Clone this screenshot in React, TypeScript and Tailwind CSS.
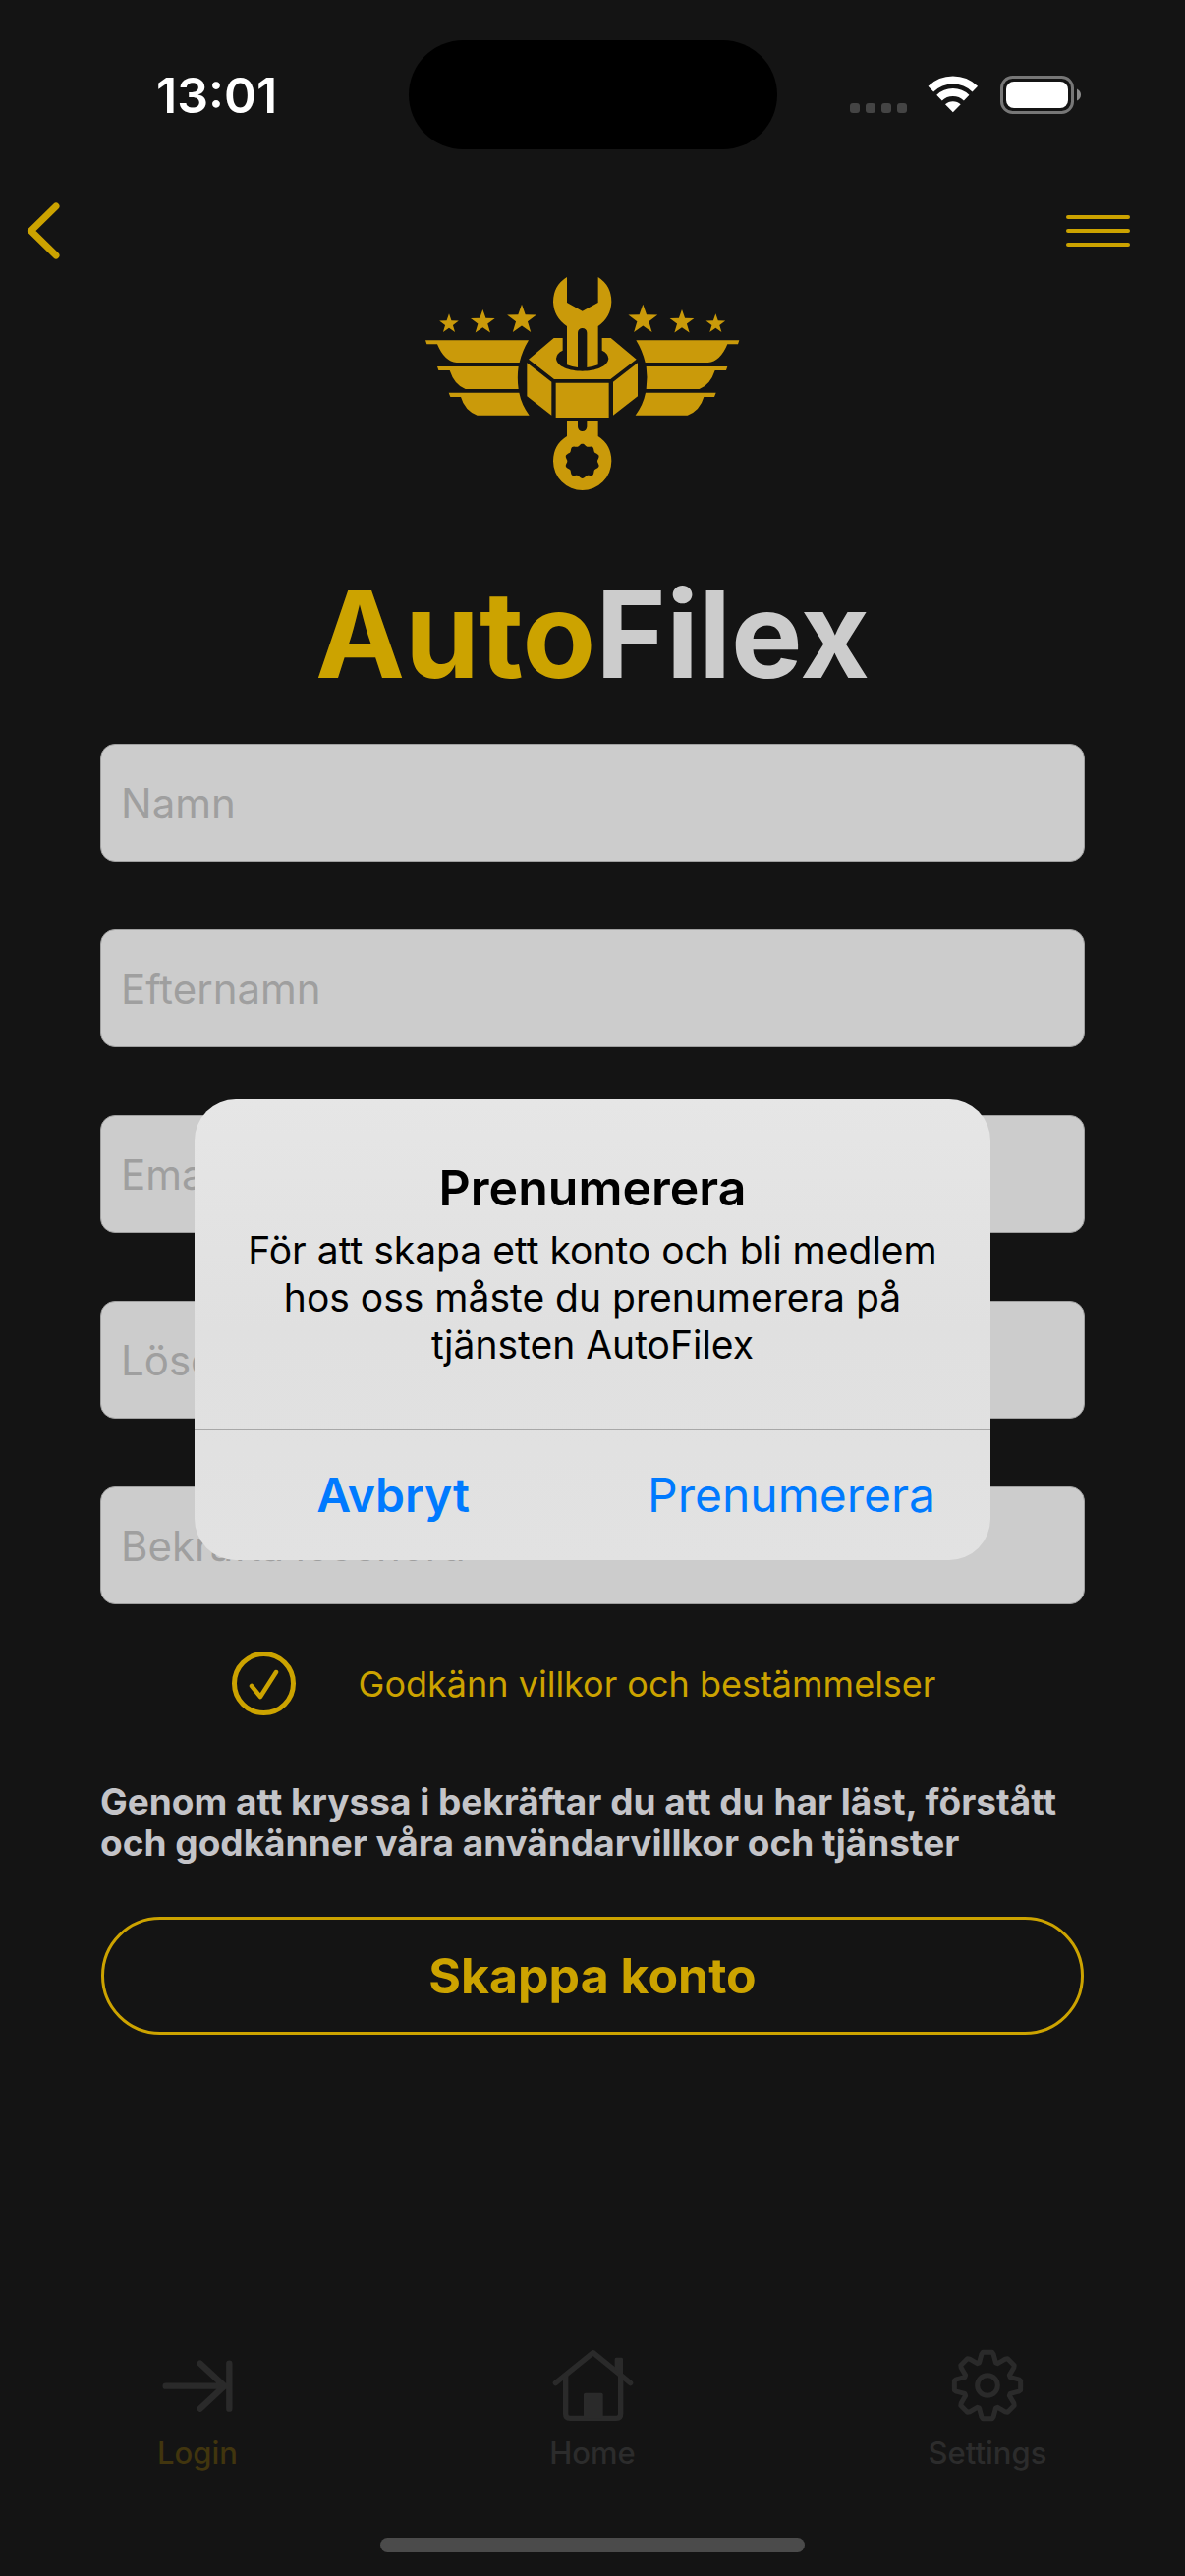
const GOLD = "#cca300";

function polar(cx: number, cy: number, r: number, deg: number) {
  const a = (deg * Math.PI) / 180;
  return `${(cx + r * Math.cos(a)).toFixed(1)} ${(cy + r * Math.sin(a)).toFixed(1)}`;
}

function starPath(cx: number, cy: number, r: number) {
  const pts = Array.from({ length: 10 }, (_, i) =>
    polar(cx, cy, i % 2 === 0 ? r : r * 0.4, -90 + i * 36),
  );
  return `M${pts.join("L")}Z`;
}

function scallopPath(cx: number, cy: number) {
  const pts = Array.from({ length: 120 }, (_, i) => {
    const deg = -90 + i * 3;
    const r = 49.5 + 3.5 * Math.cos((i * 3 * 10 * Math.PI) / 180);
    return polar(cx, cy, r, deg);
  });
  return `M${pts.join("L")}Z`;
}

function gearPath(cx: number, cy: number) {
  const pts = Array.from({ length: 8 }, (_, k) => {
    const a = -90 + k * 45;
    return [
      polar(cx, cy, 74, a - 20),
      polar(cx, cy, 97, a - 11),
      polar(cx, cy, 102, a - 8),
      polar(cx, cy, 102, a + 8),
      polar(cx, cy, 97, a + 11),
      polar(cx, cy, 74, a + 20),
    ].join("L");
  });
  return `M${pts.join("L")}Z`;
}

function WingWithStars() {
  return (
    <>
      <path d="M70 259H385Q365 292 357 327H165Q128 324 106 271H74Z" />
      <path d="M106 339H354Q349 373 354 408H192Q158 395 144 351H110Z" />
      <path d="M141 419H356Q363 455 387 488H228Q190 474 178 432H146Z" />
      <path d={starPath(142, 209, 31)} />
      <path d={starPath(245, 204, 39)} />
      <path d={starPath(364, 196, 47)} />
      <path d="M380 328L455 386V488L380 430Z" />
    </>
  );
}

function Emblem() {
  return (
    <svg viewBox="70 60 960 660" className="h-[220px] w-[320px]" fill="#ca9a0a" aria-hidden="true">
      <WingWithStars />
      <g transform="translate(1098 0) scale(-1 1)">
        <WingWithStars />
      </g>
      <path d="M502 66V144L549 170L597 144V66Q638 92 638 142Q636 190 597 216V334Q580 340 563 342V236A14 14 0 0 0 535 236V342Q518 340 502 334V216Q462 190 460 142Q460 92 502 66Z" />
      <path d="M462 252H489V290Q470 298 469 315C472 340 510 353 549 353C588 353 626 340 629 315Q628 298 609 290V252H636L714 317L635 378H463L385 317Z" />
      <path d="M468 389H630V495H468Z" />
      <path
        fillRule="evenodd"
        d={`M502 507H535V523A14 14 0 0 0 563 523V507H597V552Q638 578 638 628A89 89 0 0 1 460 628Q460 578 502 552Z${scallopPath(549, 628)}`}
      />
    </svg>
  );
}

function StatusBar() {
  return (
    <div className="grid grid-cols-[1fr_375px_1fr] items-center pt-[41px]">
      <span className="pl-[159px] text-[50px] leading-none font-semibold text-white">13:01</span>
      <span className="h-[111px] rounded-full bg-black" />
      <div className="flex items-end justify-end pr-[106px]">
        <div className="flex gap-[6px] pb-[1px]">
          <span className="size-[10px] rounded-[3px] bg-[#444444]" />
          <span className="size-[10px] rounded-[3px] bg-[#444444]" />
          <span className="size-[10px] rounded-[3px] bg-[#444444]" />
          <span className="size-[10px] rounded-[3px] bg-[#444444]" />
        </div>
        <svg viewBox="314 80 156 114" className="mb-[1px] ml-[21px] h-[38px] w-[52px]" aria-hidden="true">
          <g fill="none" stroke="#fff" strokeWidth="24">
            <path d="M324 121A97 97 0 0 1 459 121" />
            <path d="M350 148A60 60 0 0 1 433 148" />
          </g>
          <path d="M391.5 192L368 168A34 34 0 0 1 415 168Z" fill="#fff" />
        </svg>
        <svg viewBox="0 0 82 39" className="ml-[22px] h-[39px] w-[82px]" aria-hidden="true">
          <rect x="1.5" y="1.5" width="72" height="36" rx="11" fill="none" stroke="#777" strokeWidth="3" />
          <rect x="6" y="6" width="63" height="27" rx="8" fill="#fff" />
          <path d="M78 13.500Q82 15.500 82 19.500T78 25.500Z" fill="#8a8a8a" />
        </svg>
      </div>
    </div>
  );
}

function TopBar() {
  return (
    <header className="mt-[51px] flex h-16 items-center justify-between pr-14 pl-6">
      <button type="button" aria-label="Tillbaka" className="h-16 w-10">
        <svg viewBox="0 0 40 64" className="h-16 w-10" fill="none" stroke={GOLD} strokeWidth="7" strokeLinecap="round" strokeLinejoin="round">
          <path d="M33 7L7.500 32L33 57" />
        </svg>
      </button>
      <button type="button" aria-label="Meny" className="flex w-[65px] flex-col gap-[10px]">
        <span className="h-[4px] rounded-full bg-[#cca300]" />
        <span className="h-[4px] rounded-full bg-[#cca300]" />
        <span className="h-[4px] rounded-full bg-[#cca300]" />
      </button>
    </header>
  );
}

function Field({ label, type = "text" }: { label: string; type?: string }) {
  return (
    <input
      type={type}
      aria-label={label}
      placeholder={label}
      className="block h-[120px] w-full rounded-[15px] border border-[#a0a0a0] bg-[#cccccc] px-5 text-[42px] text-black placeholder:text-[#9f9f9f]"
    />
  );
}

function Terms() {
  return (
    <label className="mt-12 mr-[18px] flex h-[65px] items-center justify-center gap-16">
      <span className="grid size-[65px]">
        <input
          type="checkbox"
          defaultChecked
          className="peer col-start-1 row-start-1 size-full appearance-none rounded-full border-[5px] border-[#cca300]"
        />
        <svg
          viewBox="0 0 65 65"
          className="pointer-events-none invisible col-start-1 row-start-1 size-full peer-checked:visible"
          fill="none"
          stroke={GOLD}
          strokeWidth="4.5"
          strokeLinecap="round"
          strokeLinejoin="round"
          aria-hidden="true"
        >
          <path d="M20 35L29 46L45 21" />
        </svg>
      </span>
      <span className="text-[36px] text-[#cca300]">Godkänn villkor och bestämmelser</span>
    </label>
  );
}

function LoginIcon() {
  return (
    <svg viewBox="43 64 216 159" className="h-[53px] w-[72px]" fill="none" stroke="#2a2a2a" strokeWidth="19" strokeLinecap="round" strokeLinejoin="round" aria-hidden="true">
      <path d="M54 144H233M159 75L233 144L159 213M248 75V213" />
    </svg>
  );
}

function HomeIcon() {
  return (
    <svg viewBox="60 36 249 222" className="h-[74px] w-[83px]" fill="none" stroke="#2a2a2a" strokeWidth="16" strokeLinecap="round" strokeLinejoin="round" aria-hidden="true">
      <path d="M70 140L185 47L299 140" />
      <path d="M101 118V234Q101 247 114 247H256Q269 247 269 234V118" />
      <path d="M255 62H272Q276 62 276 67V120L251 98V67Q251 62 255 62ZM156 247V175Q156 170 161 170H210Q215 170 215 175V247Z" fill="#2a2a2a" stroke="none" />
    </svg>
  );
}

function SettingsIcon() {
  return (
    <svg viewBox="113 35 221 222" className="size-[74px]" fill="none" stroke="#2a2a2a" strokeWidth="15" strokeLinejoin="round" aria-hidden="true">
      <path d={gearPath(223.5, 146)} />
      <circle cx="223.5" cy="146" r="31" />
    </svg>
  );
}

const tabs = [
  { label: "Login", icon: <LoginIcon />, tone: "text-[#41350e]" },
  { label: "Home", icon: <HomeIcon />, tone: "text-[#2c2c2c]" },
  { label: "Settings", icon: <SettingsIcon />, tone: "text-[#2c2c2c]" },
];

function TabBar() {
  return (
    <nav className="mt-auto grid grid-cols-3 pt-12">
      {tabs.map((tab) => (
        <button key={tab.label} type="button" className="flex flex-col items-center gap-3">
          <span className="flex h-[74px] items-center">{tab.icon}</span>
          <span className={`text-[31px] leading-10 font-medium ${tab.tone}`}>{tab.label}</span>
        </button>
      ))}
    </nav>
  );
}

function SubscribeDialog() {
  return (
    <div className="absolute inset-0 flex items-center justify-center px-6 pt-[85px]">
      <div
        role="alertdialog"
        aria-modal="true"
        aria-labelledby="subscribe-title"
        aria-describedby="subscribe-text"
        className="w-full max-w-[810px] overflow-hidden rounded-[42px] bg-linear-to-b from-[#e6e6e6] via-[#e0e0e0] to-[#e2e2e2] text-center text-black"
      >
        <div className="px-12 pt-[60px] pb-[62px]">
          <h2 id="subscribe-title" className="text-[50px] leading-[60px] font-semibold">
            Prenumerera
          </h2>
          <p id="subscribe-text" className="mt-[10px] text-[39px] leading-[48px]">
            För att skapa ett konto och bli medlem hos oss måste du prenumerera på tjänsten AutoFilex
          </p>
        </div>
        <div className="grid h-[133px] grid-cols-2 border-t border-[#a8a8a8] text-[48px] text-[#007aff]">
          <button type="button" className="border-r border-[#a8a8a8] font-semibold">
            Avbryt
          </button>
          <button type="button">Prenumerera</button>
        </div>
      </div>
    </div>
  );
}

export default function App() {
  return (
    <div className="relative flex min-h-screen flex-col bg-[#141414] pb-6 font-['Inter',sans-serif]">
      <StatusBar />
      <TopBar />
      <div className="mt-[13px] mr-5 flex justify-center">
        <Emblem />
      </div>
      <h1 className="mt-[82px] text-center text-[122px] leading-[128px] font-bold text-[#cccccc]">
        <span className="text-[#cca300]">Auto</span>Filex
      </h1>
      <form className="mx-[102px] mt-[47px] flex flex-col" onSubmit={(e) => e.preventDefault()}>
        <div className="flex flex-col gap-[69px]">
          <Field label="Namn" />
          <Field label="Efternamn" />
          <Field label="Email" type="email" />
          <Field label="Lösenord" type="password" />
          <Field label="Bekräfta lösenord" type="password" />
        </div>
        <Terms />
        <p className="mt-[67px] text-[37px] leading-[42px] font-bold text-[#c4c4c8]">
          Genom att kryssa i bekräftar du att du har läst, förstått och godkänner våra användarvillkor och tjänster
        </p>
        <button
          type="submit"
          className="mx-px mt-[54px] h-[120px] rounded-full border-[3px] border-[#cca300] text-[50px] font-bold text-[#cca300]"
        >
          Skappa konto
        </button>
      </form>
      <TabBar />
      <div className="mx-auto mt-[66px] h-[15px] w-[432px] rounded-full bg-[#4b4b4b]" />
      <SubscribeDialog />
    </div>
  );
}
